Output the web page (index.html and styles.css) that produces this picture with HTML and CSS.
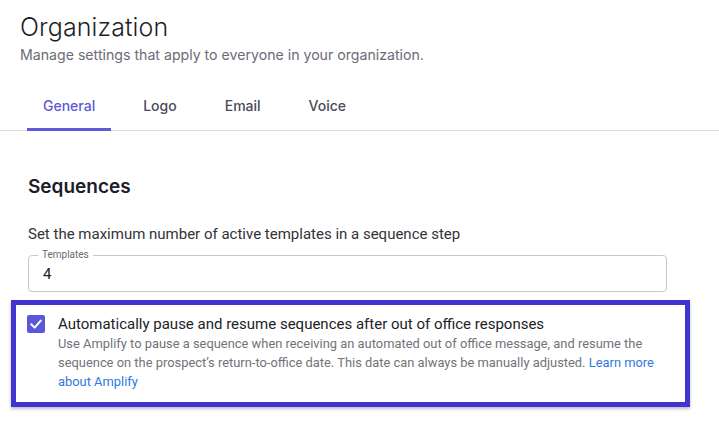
FILE: index.html
```html
<!DOCTYPE html>
<html>
<head>
<meta charset="utf-8">
<link rel="stylesheet" href="styles.css">
</head>
<body>
<div class="page">
  <header class="head">
    <h1 class="title">Organization</h1>
    <p class="subtitle">Manage settings that apply to everyone in your organization.</p>
  </header>
  <nav class="tabs">
    <div class="tab active">General</div>
    <div class="tab">Logo</div>
    <div class="tab">Email</div>
    <div class="tab">Voice</div>
  </nav>
  <section class="content">
    <h2 class="section-title">Sequences</h2>
    <p class="field-desc">Set the maximum number of active templates in a sequence step</p>
    <fieldset class="outlined">
      <legend class="legend">Templates</legend>
      <div class="value">4</div>
    </fieldset>
    <div class="highlight">
      <span class="checkbox">
        <svg width="18" height="18" viewBox="0 0 18 18"><path d="M4.2 9.3 L7.6 12.6 L13.8 5.6" fill="none" stroke="#fff" stroke-width="2" stroke-linecap="round" stroke-linejoin="round"/></svg>
      </span>
      <div class="check-text">
        <div class="check-label">Automatically pause and resume sequences after out of office responses</div>
        <div class="check-desc">Use Amplify to pause a sequence when receiving an automated out of office message, and resume the sequence on the prospect’s return-to-office date. This date can always be manually adjusted. <a class="link" href="#">Learn more about Amplify</a></div>
      </div>
    </div>
  </section>
</div>
</body>
</html>
```
FILE: styles.css
```css
html, body {
  margin: 0;
  padding: 0;
  background: #ffffff;
}
.page {
  width: 719px;
  height: 427px;
  overflow: hidden;
  font-family: Inter, "Noto Sans", sans-serif;
}
.head {
  padding: 11px 0 0 20px;
}
.title {
  margin: 0;
  font-size: 25px;
  line-height: 32px;
  font-weight: 300;
  color: #1f1f2a;
  letter-spacing: 0.1px;
}
.subtitle {
  margin: 3px 0 0 0;
  font-size: 14.15px;
  line-height: 18px;
  color: #6c6c78;
}
.tabs {
  display: flex;
  gap: 16px;
  padding-left: 27px;
  margin-top: 18px;
  height: 48px;
  align-items: flex-end;
  border-bottom: 1px solid #dcdce0;
}
.tab {
  height: 48px;
  padding: 13px 16px 0 16px;
  box-sizing: border-box;
  font-size: 14px;
  line-height: 20px;
  font-weight: 500;
  color: #4a4a58;
  border-bottom: 3px solid transparent;
  margin-bottom: -1px;
}
.tab.active {
  color: #5d59d4;
  border-bottom-color: #5f5ad6;
}
.content {
  padding: 43px 0 0 28px;
}
.section-title {
  margin: 0;
  font-size: 19px;
  line-height: 26px;
  font-weight: 600;
  color: #1d1d2a;
}
.field-desc {
  margin: 24px 0 0 0;
  font-family: Roboto, "Liberation Sans", sans-serif;
  font-size: 15px;
  line-height: 20px;
  color: #333338;
}
.outlined {
  margin: 6px 0 0 0;
  width: 639px;
  box-sizing: border-box;
  border: 1px solid #c8c8cc;
  border-radius: 4px;
  padding: 0 14px 5px 14px;
  height: 42px;
  font-family: Roboto, "Liberation Sans", sans-serif;
}
.legend {
  padding: 0 4px;
  margin-left: -5px;
  font-size: 10px;
  line-height: 10px;
  color: #6a6a70;
}
.value {
  font-size: 15px;
  line-height: 20px;
  color: #222;
  margin-top: 4px;
}
.highlight {
  margin: 8px 0 0 -17px;
  width: 679px;
  box-sizing: border-box;
  border: 5px solid #4035d0;
  box-shadow: 0 2px 3px rgba(0, 0, 0, 0.25);
  display: flex;
  gap: 13px;
  padding: 10px 22px 11px 11px;
  font-family: Roboto, "Liberation Sans", sans-serif;
}
.checkbox {
  flex: none;
  width: 18px;
  height: 18px;
  background: #5b58d8;
  border-radius: 2px;
  display: block;
}
.checkbox svg {
  display: block;
}
.check-label {
  font-size: 15px;
  line-height: 19px;
  color: #222228;
}
.check-desc {
  font-size: 12.9px;
  line-height: 19px;
  color: #727278;
}
.link {
  color: #2f78df;
  text-decoration: none;
}
```
